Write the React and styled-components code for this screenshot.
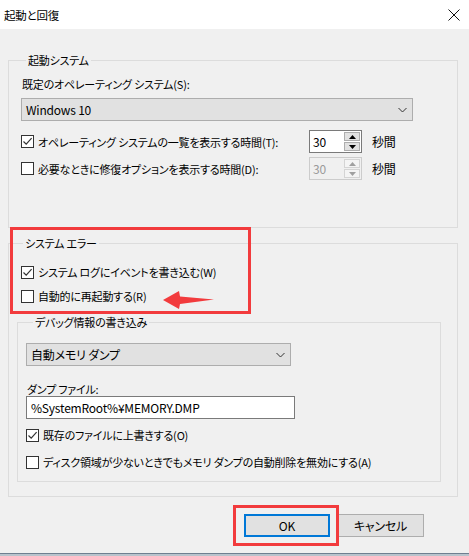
import React from "react";
import styled, { createGlobalStyle } from "styled-components";

const GlobalStyle = createGlobalStyle`
  body {
    margin: 0;
    background: #f0f0f0;
    font-family: "Noto Sans CJK JP", "Noto Sans", sans-serif;
    font-size: 11px;
    color: #000;
  }
`;

const Window = styled.div`
  width: 469px;
  height: 556px;
  display: flex;
  flex-direction: column;
  background: #f0f0f0;
  font-feature-settings: "palt";
  letter-spacing: -0.2px;
  overflow: hidden;
`;

const TitleBar = styled.div`
  height: 29px;
  flex: none;
  background: #fff;
  display: flex;
  align-items: center;
  justify-content: space-between;
  padding: 0 9px 0 4px;
  font-size: 11.5px;
`;

const Body = styled.div`
  flex: 1;
  padding: 23px 11px 0 8px;
  display: flex;
  flex-direction: column;
`;

const Group = styled.fieldset`
  margin: ${(p) => p.$margin || "0"};
  padding: ${(p) => p.$pad || "0"};
  border: 1px solid #dcdcdc;
  min-width: 0;
  display: flex;
  flex-direction: column;
  align-items: flex-start;
`;

const Legend = styled.legend`
  padding: 0 2px;
  margin-left: ${(p) => p.$indent || 5}px;
  line-height: 16px;
`;

const Label = styled.div`
  line-height: ${(p) => p.$lh || 16}px;
  margin-top: ${(p) => p.$top || 0}px;
  padding-left: 1px;
`;

const Select = styled.div`
  box-sizing: border-box;
  width: ${(p) => p.$w}px;
  height: 23px;
  margin-top: ${(p) => p.$top || 0}px;
  background: #e1e1e1;
  border: 1px solid #adadad;
  display: flex;
  align-items: center;
  justify-content: space-between;
  padding: 0 5px 0 4px;
  font-size: 12px;
`;

const TextBox = styled.div`
  box-sizing: border-box;
  width: ${(p) => p.$w}px;
  height: 23px;
  background: #fff;
  border: 1px solid #7a7a7a;
  display: flex;
  align-items: center;
  padding-left: 4px;
  font-size: 12px;
`;

const SpinRow = styled.div`
  display: grid;
  grid-template-columns: 288px 53px auto;
  align-items: center;
  margin-top: ${(p) => p.$top || 0}px;
`;

const Spin = styled.div`
  box-sizing: border-box;
  width: 53px;
  height: 23px;
  border: 1px solid ${(p) => (p.$off ? "#cccccc" : "#7a7a7a")};
  background: ${(p) => (p.$off ? "#f0f0f0" : "#fff")};
  color: ${(p) => (p.$off ? "#9a9a9a" : "#000")};
  display: flex;
  align-items: stretch;
  justify-content: space-between;
  padding: 1px;
  font-size: 12px;
`;

const SpinValue = styled.span`
  display: flex;
  align-items: center;
  padding-left: 2px;
`;

const SpinButtons = styled.div`
  width: 16px;
  display: flex;
  flex-direction: column;
  gap: 1px;
`;

const SpinButton = styled.div`
  flex: 1;
  border: 1px solid ${(p) => (p.$off ? "#d4d4d4" : "#adadad")};
  background: ${(p) => (p.$off ? "#f4f4f4" : "#e1e1e1")};
  display: flex;
  align-items: center;
  justify-content: center;
`;

const Unit = styled.span`
  line-height: 16px;
  margin-left: 10px;
  font-size: 12px;
`;

const CheckRow = styled.label`
  display: flex;
  align-items: center;
  gap: 4px;
  line-height: 16px;
  margin-top: ${(p) => p.$top || 0}px;
  margin-left: ${(p) => p.$left || 0}px;
`;

const Box = styled.span`
  box-sizing: border-box;
  width: 13px;
  height: 13px;
  flex: none;
  border: 1px solid #333;
  background: #fff;
  display: flex;
  align-items: center;
  justify-content: center;
`;

const Section = styled.div`
  position: relative;
  margin-top: 7px;
  display: flex;
  flex-direction: column;
`;

const Highlight = styled.div`
  position: absolute;
  box-sizing: border-box;
  border: 3px solid #f23b3d;
  pointer-events: none;
`;

const ArrowMark = styled.svg`
  position: absolute;
  left: 154px;
  top: 55px;
`;

const Footer = styled.div`
  display: flex;
  justify-content: flex-end;
  gap: 7px;
  padding: 17px 34px 0 0;
`;

const ButtonWrap = styled.span`
  position: relative;
  display: flex;
`;

const Button = styled.div`
  box-sizing: border-box;
  width: ${(p) => p.$w || 86}px;
  height: 23px;
  background: #e1e1e1;
  border: ${(p) => (p.$primary ? "2px solid #0078d7" : "1px solid #adadad")};
  display: flex;
  align-items: center;
  justify-content: center;
  font-size: 12px;
`;

const BottomEdge = styled.div`
  margin-top: auto;
  height: 2px;
  flex: none;
  border-top: 1px solid #6f7f90;
  background: #b9c3cc;
`;

function Check({ checked, children, top, left }) {
  return (
    <CheckRow $top={top} $left={left}>
      <Box>
        {checked && (
          <svg width="11" height="11" viewBox="0 0 11 11">
            <path d="M1.5 5.5 L4.2 8.2 L9.6 2.2" fill="none" stroke="#333" strokeWidth="1.2" />
          </svg>
        )}
      </Box>
      {children}
    </CheckRow>
  );
}

function Chevron() {
  return (
    <svg width="9" height="6" viewBox="0 0 9 6">
      <path d="M0.5 1 L4.5 5 L8.5 1" fill="none" stroke="#333" strokeWidth="1" />
    </svg>
  );
}

function Tri({ down, off }) {
  return (
    <svg width="7" height="4" viewBox="0 0 7 4">
      <path d={down ? "M0 0 H7 L3.5 4 Z" : "M0 4 H7 L3.5 0 Z"} fill={off ? "#a0a0a0" : "#000"} />
    </svg>
  );
}

function SpinBox({ value, off }) {
  return (
    <Spin $off={off}>
      <SpinValue>{value}</SpinValue>
      <SpinButtons>
        <SpinButton $off={off}>
          <Tri off={off} />
        </SpinButton>
        <SpinButton $off={off}>
          <Tri down off={off} />
        </SpinButton>
      </SpinButtons>
    </Spin>
  );
}

export default function App() {
  return (
    <Window>
      <GlobalStyle />
      <TitleBar>
        <span>起動と回復</span>
        <svg width="12" height="12" viewBox="0 0 12 12">
          <path d="M0.5 0.5 L11.5 11.5 M11.5 0.5 L0.5 11.5" stroke="#111" strokeWidth="1" />
        </svg>
      </TitleBar>

      <Body>
        <Group $pad="8px 0 47px 12px">
          <Legend $indent={5}>起動システム</Legend>
          <Label>既定のオペレーティング システム(S):</Label>
          <Select $w={392} $top={6}>
            <span>Windows 10</span>
            <Chevron />
          </Select>
          <SpinRow $top={9}>
            <Check checked>オペレーティング システムの一覧を表示する時間(T):</Check>
            <SpinBox value="30" />
            <Unit>秒間</Unit>
          </SpinRow>
          <SpinRow $top={4}>
            <Check>必要なときに修復オプションを表示する時間(D):</Check>
            <SpinBox value="30" off />
            <Unit>秒間</Unit>
          </SpinRow>
        </Group>

        <Section>
          <Group $pad="13px 16px 14px 8px">
            <Legend $indent={6}>システム エラー</Legend>
            <Check checked left={4}>
              システム ログにイベントを書き込む(W)
            </Check>
            <Check top={8} left={4}>
              自動的に再起動する(R)
            </Check>
            <Group $margin="10px 0 0 0" $pad="13px 0 11px 8px" style={{ alignSelf: "stretch" }}>
              <Legend $indent={7}>デバッグ情報の書き込み</Legend>
              <Select $w={265}>
                <span>自動メモリ ダンプ</span>
                <Chevron />
              </Select>
              <Label $lh={14} $top={16}>
                ダンプ ファイル:
              </Label>
              <TextBox $w={269}>%SystemRoot%¥MEMORY.DMP</TextBox>
              <Check checked top={8}>
                既存のファイルに上書きする(O)
              </Check>
              <Check top={11}>ディスク領域が少ないときでもメモリ ダンプの自動削除を無効にする(A)</Check>
            </Group>
          </Group>
          <Highlight style={{ left: 2, top: -8, width: 241, height: 87 }} />
          <ArrowMark width="53" height="20" viewBox="0 0 53 20">
            <path d="M1 10 L17 1 L18 6.5 L52 9.5 L18 14 L17 19 Z" fill="#f23b3d" />
          </ArrowMark>
        </Section>

        <Footer>
          <ButtonWrap>
            <Button $primary>OK</Button>
            <Highlight style={{ left: -11, top: -9, width: 106, height: 41 }} />
          </ButtonWrap>
          <Button $w={87}>キャンセル</Button>
        </Footer>
      </Body>
      <BottomEdge />
    </Window>
  );
}
